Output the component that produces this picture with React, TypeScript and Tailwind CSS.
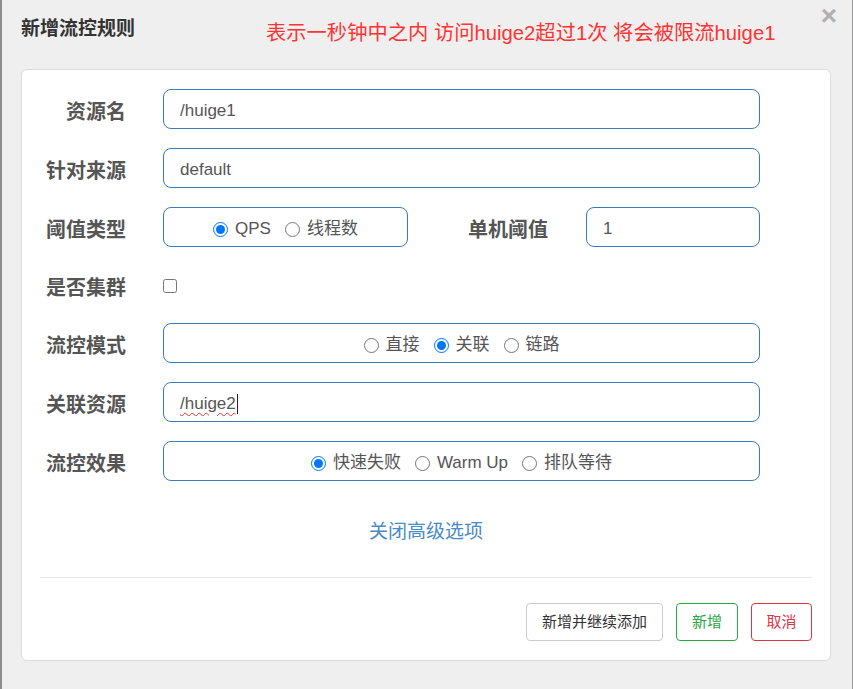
import React from "react";

const font = { fontFamily: '"Liberation Sans", "Noto Sans CJK SC", sans-serif' };

function Label({ text }: { text: string }) {
  return (
    <div className="w-[104px] shrink-0 pt-[6px] text-right text-[20px] font-bold leading-[24px] text-[#555]">
      {text}
    </div>
  );
}

function TextBox({ value, width, spell }: { value: string; width: string; spell?: boolean }) {
  return (
    <div
      className={`${width} h-[40px] shrink-0 rounded-[8px] border border-[#3a7bbd] bg-white pl-[16px] pt-[3px] flex items-center text-[17px] text-[#555]`}
    >
      {spell ? (
        <span className="flex items-center">
          <span className="underline decoration-wavy decoration-[#e33] decoration-[1px] underline-offset-[3px]">
            {value}
          </span>
          <span className="ml-[1px] inline-block h-[20px] w-[1.5px] bg-[#222]" />
        </span>
      ) : (
        value
      )}
    </div>
  );
}

function Radio({ label, checked }: { label: string; checked?: boolean }) {
  return (
    <label className="flex items-center gap-[7px] text-[17px] text-[#555]">
      <input
        type="radio"
        readOnly
        checked={!!checked}
        className="m-0 h-[15px] w-[15px] accent-[#0075ff]"
      />
      <span>{label}</span>
    </label>
  );
}

function RadioBox({ items, width }: { items: { label: string; checked?: boolean }[]; width: string }) {
  return (
    <div
      className={`${width} h-[40px] shrink-0 rounded-[8px] border border-[#3a7bbd] bg-white pt-[4px] flex items-center justify-center gap-[14px]`}
    >
      {items.map((it) => (
        <Radio key={it.label} label={it.label} checked={it.checked} />
      ))}
    </div>
  );
}

export default function App() {
  return (
    <div
      style={font}
      className="w-[853px] h-[689px] overflow-hidden bg-[#efefef] border-l-[2px] border-l-[#8c8c8c] border-r border-r-[#9a9a9a] flex flex-col"
    >
      {/* Header */}
      <div className="h-[69px] shrink-0 flex items-start">
        <div className="ml-[19px] mt-[18px] text-[19px] font-bold leading-[22px] text-[#333]">新增流控规则</div>
        <div className="ml-[131px] mt-[22px] text-[20.3px] leading-[22px] text-[#ff3333]">
          表示一秒钟中之内 访问huige2超过1次 将会被限流huige1
        </div>
        <div className="ml-auto mr-[15px] mt-[2px] text-[28px] font-bold leading-none text-[#b0b0b0]">×</div>
      </div>

      {/* Card */}
      <div className="ml-[19px] mr-[21px] rounded-[6px] border border-[#dcdcdc] bg-white pt-[19px] pb-[19px]">
        <div className="flex flex-col gap-[19px]">
          <div className="flex items-center h-[40px]">
            <Label text="资源名" />
            <div className="ml-[37px]">
              <TextBox value="/huige1" width="w-[597px]" />
            </div>
          </div>
          <div className="flex items-center h-[40px]">
            <Label text="针对来源" />
            <div className="ml-[37px]">
              <TextBox value="default" width="w-[597px]" />
            </div>
          </div>
          <div className="flex items-center h-[40px]">
            <Label text="阈值类型" />
            <div className="ml-[37px] flex items-center">
              <RadioBox width="w-[245px]" items={[{ label: "QPS", checked: true }, { label: "线程数" }]} />
              <div className="w-[140px] pt-[6px] text-right text-[20px] font-bold leading-[24px] text-[#555]">单机阈值</div>
              <div className="ml-[38px]">
                <TextBox value="1" width="w-[174px]" />
              </div>
            </div>
          </div>
          <div className="flex items-center h-[38px]">
            <Label text="是否集群" />
            <div className="ml-[37px] pt-[2px] flex items-center">
              <input type="checkbox" readOnly className="m-0 h-[14px] w-[14px]" />
            </div>
          </div>
          <div className="flex items-center h-[40px]">
            <Label text="流控模式" />
            <div className="ml-[37px]">
              <RadioBox
                width="w-[597px]"
                items={[{ label: "直接" }, { label: "关联", checked: true }, { label: "链路" }]}
              />
            </div>
          </div>
          <div className="flex items-center h-[40px]">
            <Label text="关联资源" />
            <div className="ml-[37px]">
              <TextBox value="/huige2" width="w-[597px]" spell />
            </div>
          </div>
          <div className="flex items-center h-[40px]">
            <Label text="流控效果" />
            <div className="ml-[37px]">
              <RadioBox
                width="w-[597px]"
                items={[{ label: "快速失败", checked: true }, { label: "Warm Up" }, { label: "排队等待" }]}
              />
            </div>
          </div>
        </div>

        <div className="mt-[40px] text-center text-[19px] leading-[22px] text-[#4a8ac9]">关闭高级选项</div>

        <div className="mx-[18px] mt-[34px] h-px bg-[#e5e5e5]" />

        <div className="mx-[18px] mt-[25px] flex justify-end gap-[13px] text-[15px]">
          <button className="h-[38px] w-[137px] rounded-[4px] border border-[#ccc] bg-white pt-[1px] text-[#333]">新增并继续添加</button>
          <button className="h-[38px] w-[62px] rounded-[4px] border border-[#28a745] bg-white pt-[1px] text-[#28a745]">新增</button>
          <button className="h-[38px] w-[61px] rounded-[4px] border border-[#dc3545] bg-white pt-[1px] text-[#dc3545]">取消</button>
        </div>
      </div>
    </div>
  );
}
